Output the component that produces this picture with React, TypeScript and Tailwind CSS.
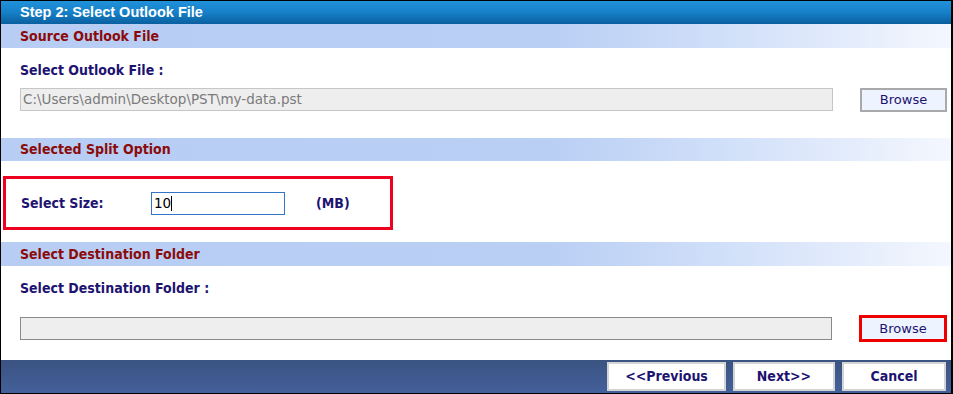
import React from "react";

const V = { fontFamily: '"DejaVu Sans Condensed", "DejaVu Sans", Verdana, sans-serif' };
const D = { fontFamily: '"DejaVu Sans", Verdana, sans-serif' };
const A = { fontFamily: '"Liberation Sans", Arial, sans-serif' };

function SectionHeader({ title, h }: { title: string; h: string }) {
  return (
    <div
      className={`${h} flex items-center pl-[19px] text-[14px] font-bold text-[#8b0b0b] bg-[linear-gradient(to_right,#b7cdf4_0%,#b9cff4_58%,#d6e3fa_80%,#f4f7fe_100%)]`}
      style={V}
    >
      {title}
    </div>
  );
}

function BrowseBtn({ red }: { red?: boolean }) {
  return (
    <div
      className={`flex items-center justify-center bg-[#edf4ff] text-[13px] text-[#1d1370] ${
        red ? "w-[88px] h-[27px] border-[3px] border-[#ee0000]" : "w-[87px] h-[24px] border-2 border-[#a9a9a9]"
      }`}
      style={D}
    >
      Browse
    </div>
  );
}

function FooterBtn({ label, w }: { label: string; w: string }) {
  return (
    <div
      className={`${w} h-[29px] flex items-center justify-center bg-white border-2 border-[#d4d4d4] text-[14px] font-bold text-[#1d1370]`}
      style={V}
    >
      {label}
    </div>
  );
}

export default function App() {
  return (
    <div className="w-[953px] h-[394px] bg-white border-l border-r-2 border-b border-t border-black flex flex-col overflow-hidden">
      <div
        className="h-[23px] flex items-center pl-[19px] text-[14.5px] font-bold text-white bg-[linear-gradient(to_bottom,#2192db_0%,#1680c8_50%,#0b5f9f_100%)]"
        style={A}
      >
        Step 2: Select Outlook File
      </div>
      <SectionHeader title="Source Outlook File" h="h-[24px]" />
      <div className="h-[90px] flex flex-col pl-[19px] pr-[4px]">
        <div className="mt-[14px] h-[16px] flex items-center text-[14px] font-bold text-[#1d1370]" style={V}>
          Select Outlook File :
        </div>
        <div className="mt-[10px] flex items-start justify-between">
          <div
            className="w-[813px] h-[23px] bg-[#eeeeee] border border-[#c6c6c6] flex items-center pl-[2px] text-[13.5px] text-[#7a7a7a]"
            style={D}
          >
            C:\Users\admin\Desktop\PST\my-data.pst
          </div>
          <BrowseBtn />
        </div>
      </div>
      <SectionHeader title="Selected Split Option" h="h-[23px]" />
      <div className="h-[81px] flex flex-col pl-[2px]">
        <div className="mt-[15px] w-[390px] h-[54px] border-[3px] border-[#ee0020] flex items-center">
          <div className="w-[145px] pl-[15px] text-[14px] font-bold text-[#1d1370]" style={V}>
            Select Size:
          </div>
          <div
            className="w-[134px] h-[23px] border border-[#3476c6] flex items-center pl-[2px] text-[13.5px] text-black"
            style={D}
          >
            10<span className="inline-block w-px h-[15px] bg-black" />
          </div>
          <div className="ml-[31px] text-[14px] font-bold text-[#1d1370]" style={V}>
            (MB)
          </div>
        </div>
      </div>
      <SectionHeader title="Select Destination Folder" h="h-[24px]" />
      <div className="h-[94px] flex flex-col pl-[19px] pr-[4px]">
        <div className="mt-[14px] h-[16px] flex items-center text-[14px] font-bold text-[#1d1370]" style={V}>
          Select Destination Folder :
        </div>
        <div className="mt-[19px] flex items-center justify-between">
          <div className="w-[812px] h-[23px] bg-[#eeeeee] border border-[#8a8a8a]" />
          <BrowseBtn red />
        </div>
      </div>
      <div className="flex-1 flex items-center justify-end gap-[7px] pr-[5px] bg-[linear-gradient(to_bottom,#3a5381_0%,#44609a_100%)]">
        <FooterBtn label="<<Previous" w="w-[119px]" />
        <FooterBtn label="Next>>" w="w-[102px]" />
        <FooterBtn label="Cancel" w="w-[104px]" />
      </div>
    </div>
  );
}
